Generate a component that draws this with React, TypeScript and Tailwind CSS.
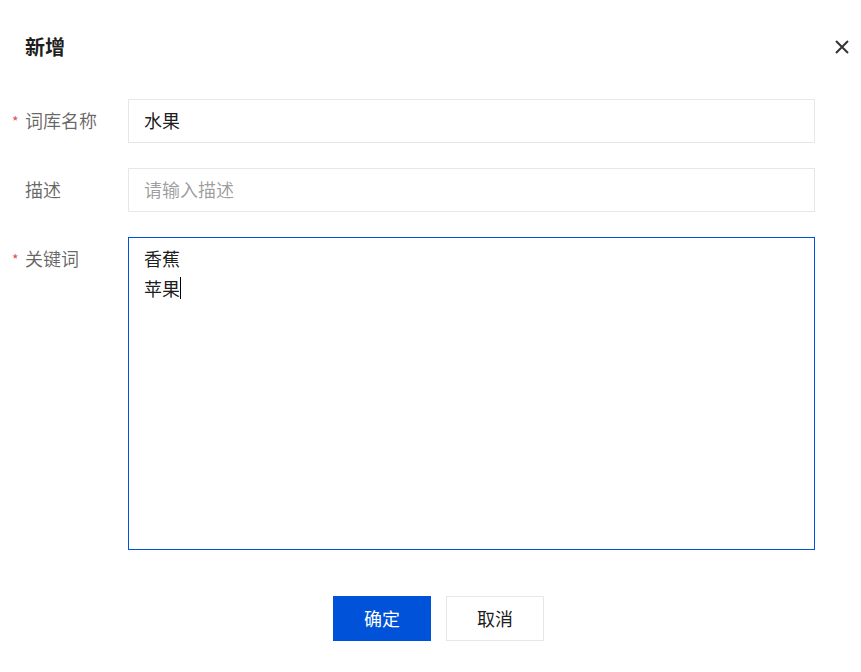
const FONT = '[font-family:"Noto_Sans_CJK_SC","Noto_Sans",sans-serif]'

function Label({ text, required }: { text: string; required?: boolean }) {
  return (
    <div className="relative w-[128px] shrink-0 pl-[25px] text-[18px] leading-[43px] text-[rgba(0,0,0,0.6)]">
      {required && (
        <span className="absolute left-[12px] top-[15px] text-[14px] leading-[14px] text-[#e34d59]">*</span>
      )}
      {text}
    </div>
  )
}

export default function App() {
  return (
    <div className={`${FONT} min-h-[672px] w-full bg-white`}>
      {/* 头部 */}
      <div className="flex items-center justify-between pl-[25px] pr-[9px] pt-[33px]">
        <h2 className="text-[20px] font-bold leading-[28px] text-[rgba(0,0,0,0.9)]">新增</h2>
        <button className="flex h-[20px] w-[20px] items-center justify-center text-[#333]">
          <svg width="16" height="16" viewBox="0 0 16 16" fill="none">
            <path d="M2 2L14 14M14 2L2 14" stroke="currentColor" strokeWidth="2" />
          </svg>
        </button>
      </div>

      {/* 表单 */}
      <div className="mt-[38px] flex flex-col gap-[25px] pr-[46px]">
        <div className="flex">
          <Label text="词库名称" required />
          <div className="flex h-[44px] flex-1 items-center border border-[#e7e7e7] px-[15px] pb-px text-[18px] text-[rgba(0,0,0,0.9)]">
            水果
          </div>
        </div>
        <div className="flex">
          <Label text="描述" />
          <div className="flex h-[44px] flex-1 items-center border border-[#e7e7e7] px-[15px] pb-px text-[18px] text-[rgba(0,0,0,0.4)]">
            请输入描述
          </div>
        </div>
        <div className="flex">
          <Label text="关键词" required />
          <div className="h-[313px] flex-1 border border-[#0052d9] px-[15px] pt-[5px] text-[18px] leading-[30px] text-[rgba(0,0,0,0.9)]">
            <div>香蕉</div>
            <div className="flex items-center">
              苹果
              <span className="inline-block h-[22px] w-px bg-black" />
            </div>
          </div>
        </div>
      </div>

      {/* 操作按钮 */}
      <div className="mt-[46px] flex justify-center gap-[15px] pl-[16px]">
        <button className="h-[45px] w-[98px] bg-[#0052d9] pb-px text-[18px] text-white">确定</button>
        <button className="h-[45px] w-[98px] border border-[#e7e7e7] bg-white pb-px text-[18px] text-[rgba(0,0,0,0.9)]">
          取消
        </button>
      </div>
    </div>
  )
}
